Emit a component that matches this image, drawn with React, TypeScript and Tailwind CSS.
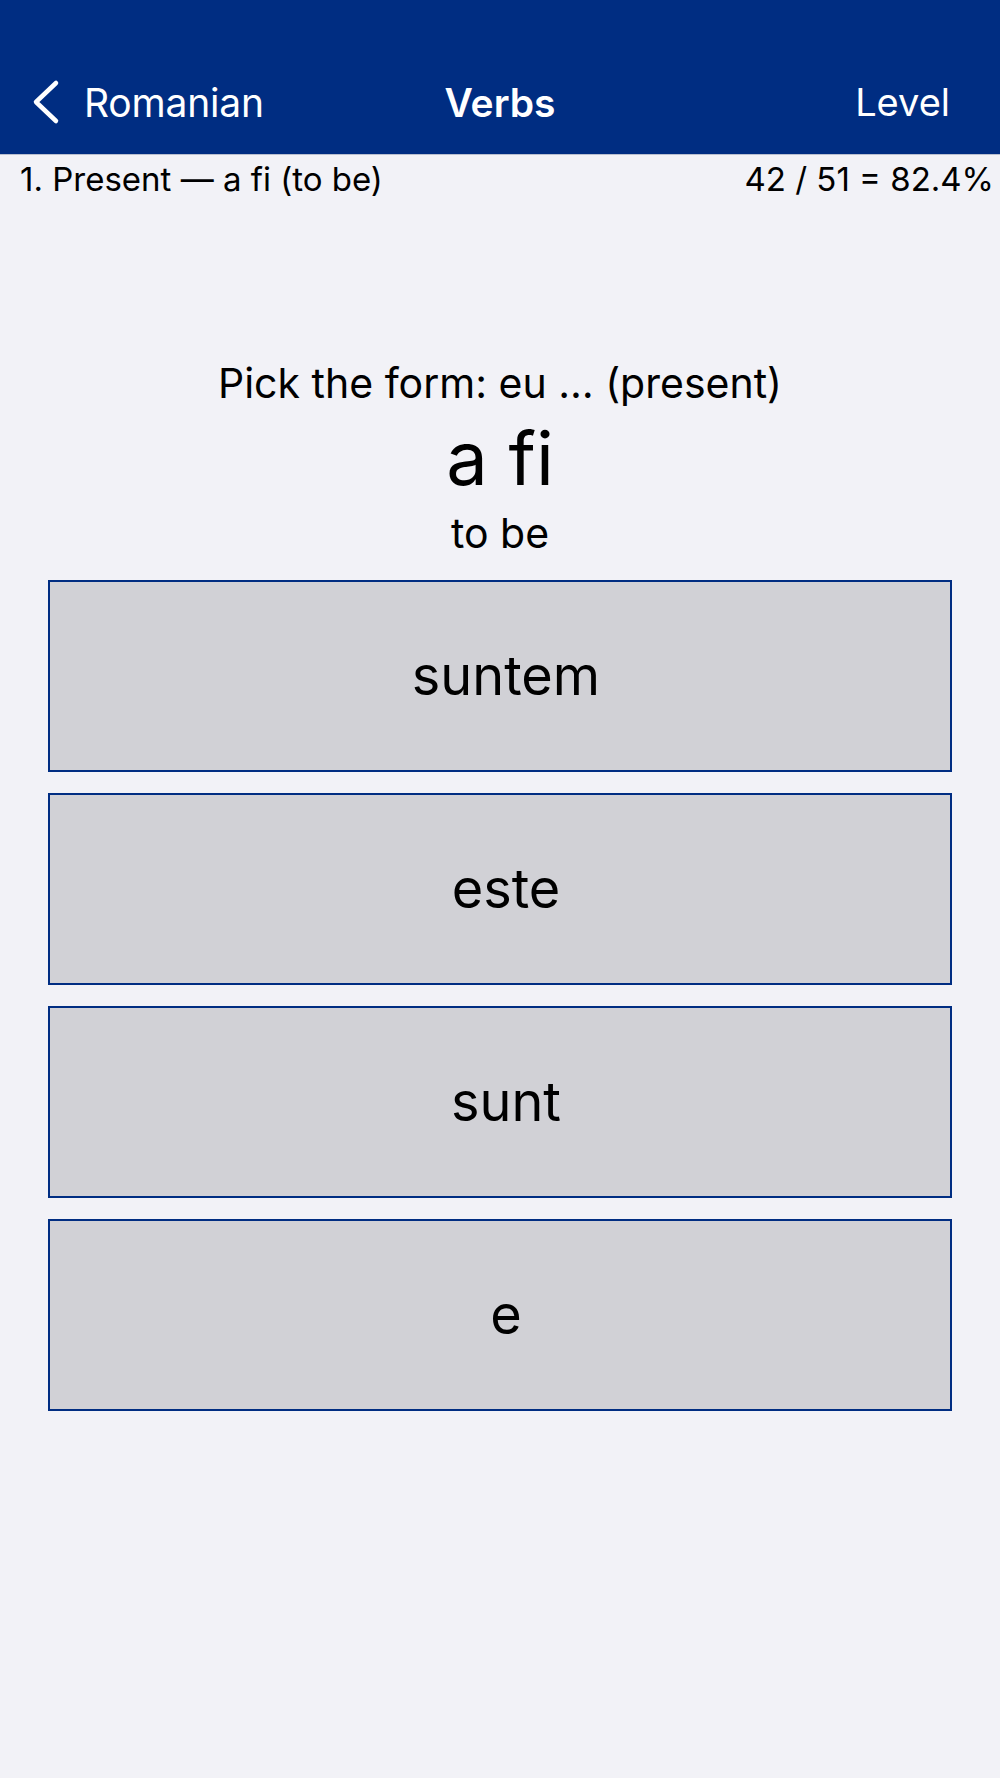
import React from "react";

const choices = ["suntem", "este", "sunt", "e"];

export default function App() {
  return (
    <div
      className="min-h-screen bg-[#f2f2f7] text-black"
      style={{ fontFamily: "Inter, 'Noto Sans', sans-serif" }}
    >
      {/* nav bar */}
      <header className="h-[155px] pt-[56px] bg-[#002d82] border-b border-[#b9bfd0]">
        <div className="h-[92px] px-[32px] grid grid-cols-3 items-center text-white">
          <div className="flex items-center gap-[24px]">
            <svg width="28" height="46" viewBox="0 0 28 46" fill="none">
              <polyline
                points="24,4 4,23 24,42"
                stroke="white"
                strokeWidth="4.5"
                strokeLinecap="round"
                strokeLinejoin="round"
              />
            </svg>
            <span className="text-[39px] leading-none tracking-[-0.2px]">Romanian</span>
          </div>
          <div className="text-center text-[39px] font-semibold leading-none">Verbs</div>
          <div className="text-right pr-[18px] text-[38px] leading-none">Level</div>
        </div>
      </header>

      {/* progress row */}
      <div className="flex justify-between items-center pl-[20px] pr-[6px] h-[48px] text-[33px] leading-none">
        <span>1. Present — a fi (to be)</span>
        <span>42 / 51 = 82.4%</span>
      </div>

      {/* prompt */}
      <div className="mt-[158px] flex flex-col items-center">
        <div className="text-[41px] leading-[44px]">Pick the form: eu … (present)</div>
        <div className="mt-[13px] text-[74px] leading-[80px]">a fi</div>
        <div className="mt-[13px] text-[41px] leading-[44px]">to be</div>
      </div>

      {/* answers */}
      <div className="mt-[25px] px-[48px] flex flex-col gap-[21px]">
        {choices.map((c) => (
          <button
            key={c}
            type="button"
            className="h-[192px] w-full bg-[#d1d1d6] border-2 border-[#002d82] pl-[12px] flex items-center justify-center text-[54px] leading-none"
          >
            {c}
          </button>
        ))}
      </div>
    </div>
  );
}
